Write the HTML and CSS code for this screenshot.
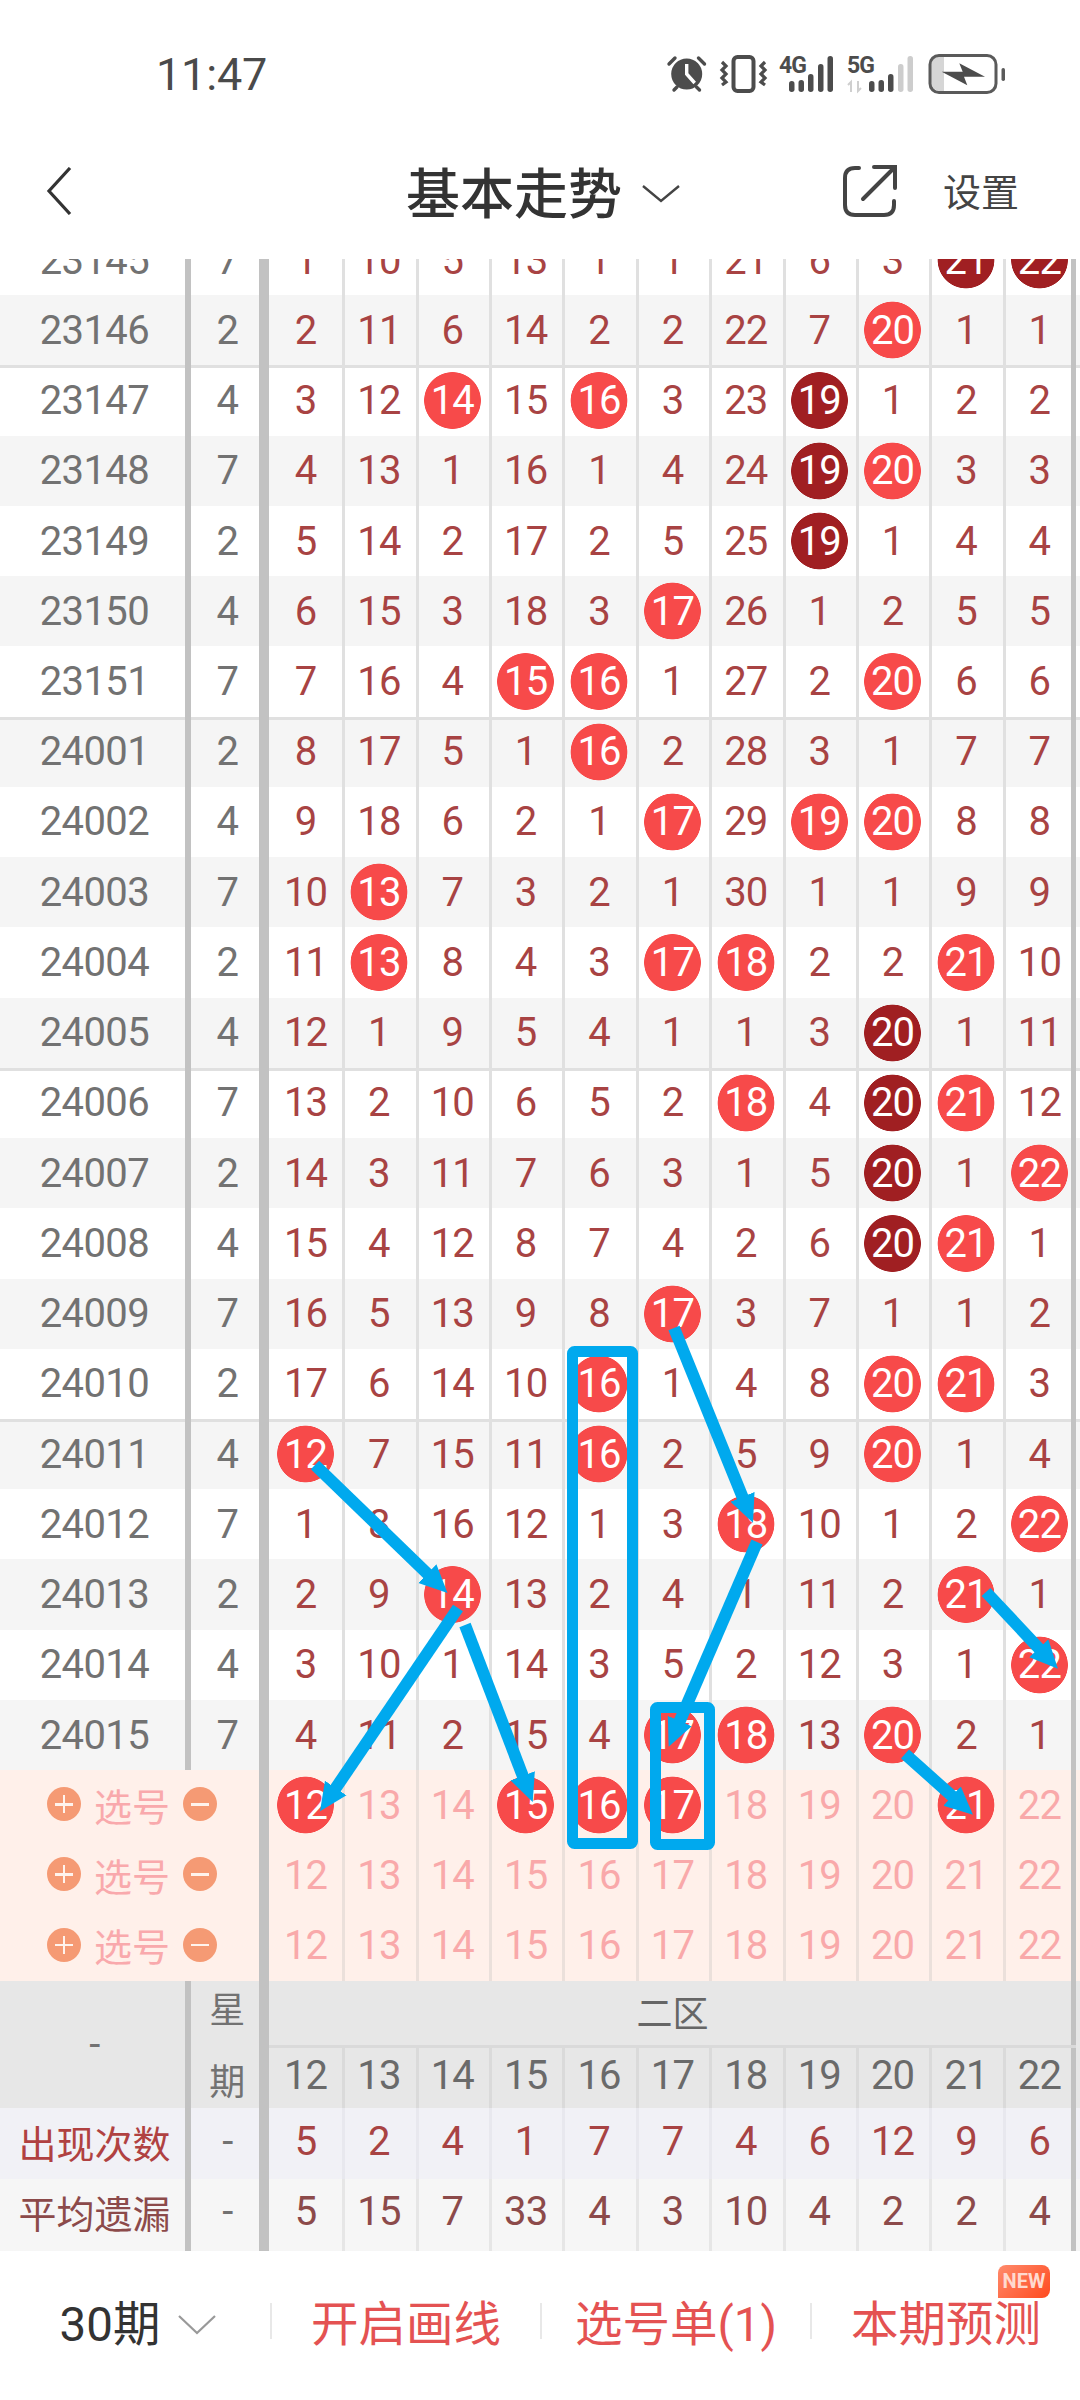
FILE: index.html
```html
<!DOCTYPE html>
<html lang="zh-CN">
<head>
    <meta charset="UTF-8">
    <meta name="viewport" content="width=device-width, initial-scale=1.0">
    <title>基本走势</title>
    <link rel="stylesheet" href="styles.css">
</head>
<body>
<div class="page">
    <!-- 状态栏 -->
    <div class="status">
        <span class="time">11:47</span>
        <svg class="status-icons" width="340" height="44" viewBox="0 0 340 44">
            <circle cx="20.7" cy="23" r="15.5" fill="#4c4c4c"/>
            <path d="M20.7 13v10l8 9" fill="none" stroke="#fff" stroke-width="3.4"/>
            <path d="M3 13l6-6M38.5 13l-6-6M8 39l3-3M33.5 39l-3-3" fill="none" stroke="#4c4c4c" stroke-width="3.4" stroke-linecap="round"/>
            <rect x="67.5" y="6" width="20" height="34" rx="4" fill="none" stroke="#4c4c4c" stroke-width="4"/>
            <path d="M56 11l4 4-4 4 4 4-4 4 4 4-4 3M99 11l-4 4 4 4-4 4 4 4-4 4 4 3" fill="none" stroke="#4c4c4c" stroke-width="3.2"/>
            <text x="113" y="22" class="net">4G</text>
            <g fill="#4c4c4c">
                <rect x="123" y="30" width="5.5" height="11" rx="2.7"/>
                <rect x="132.5" y="29" width="5.5" height="12" rx="2.7"/>
                <rect x="142" y="23" width="5.5" height="18" rx="2.7"/>
                <rect x="152" y="13" width="5.5" height="28" rx="2.7"/>
                <rect x="161.5" y="5" width="5.5" height="36" rx="2.7"/>
            </g>
            <text x="181" y="22" class="net">5G</text>
            <path d="M185 41V31l-3 3M192 30v10l3-3" fill="none" stroke="#cfcfcf" stroke-width="2"/>
            <rect x="203" y="30" width="5.5" height="11" rx="2.7" fill="#4c4c4c"/>
            <rect x="212.5" y="29" width="5.5" height="12" rx="2.7" fill="#4c4c4c"/>
            <rect x="222" y="23" width="5.5" height="18" rx="2.7" fill="#4c4c4c"/>
            <rect x="232" y="13" width="5.5" height="28" rx="2.7" fill="#cdcdcd"/>
            <rect x="241.5" y="5" width="5.5" height="36" rx="2.7" fill="#cdcdcd"/>
            <path d="M265 14a9 9 0 0 1 9-9h4v35h-4a9 9 0 0 1-9-9z" fill="#d6d6d6"/>
            <rect x="264" y="4.5" width="66" height="37" rx="9" fill="none" stroke="#5a5a5a" stroke-width="3"/>
            <path d="M275.7 20.7h21l-3.4-8.4L319 25.7h-21l3.3 8.6z" fill="#4c4c4c"/>
            <rect x="335.5" y="17" width="3.5" height="13" rx="1.7" fill="#5a5a5a"/>
        </svg>
    </div>

    <!-- 标题栏 -->
    <div class="nav">
        <svg class="back" width="26" height="48" viewBox="0 0 26 48">
            <path d="M24 1L3 24l21 23" fill="none" stroke="#333" stroke-width="3.2"/>
        </svg>
        <div class="nav-title">
            <span>基本走势</span>
            <svg width="38" height="18" viewBox="0 0 38 18">
                <path d="M1 1l18 15L37 1" fill="none" stroke="#444" stroke-width="2.4"/>
            </svg>
        </div>
        <div class="nav-actions">
            <svg width="54" height="52" viewBox="0 0 54 52">
                <path d="M16 3H12Q2 3 2 13V40Q2 50 12 50H41Q51 50 51 40V36" fill="none" stroke="#444" stroke-width="4" stroke-linecap="round"/>
                <path d="M20 34L50 4M31 2H52V23" fill="none" stroke="#444" stroke-width="4" stroke-linecap="round"/>
            </svg>
            <span>设置</span>
        </div>
    </div>

    <div class="board">
        <div class="scroll">
            <div class="rows">
                <div class="row"><span class="per">23145</span><span class="wk">7</span><b>1</b><b>10</b><b>5</b><b>13</b><b>1</b><b>1</b><b>21</b><b>6</b><b>3</b><b class="d">21</b><b class="d">22</b></div>
                <div class="row band"><span class="per">23146</span><span class="wk">2</span><b>2</b><b>11</b><b>6</b><b>14</b><b>2</b><b>2</b><b>22</b><b>7</b><b class="h">20</b><b>1</b><b>1</b></div>
                <div class="row line"><span class="per">23147</span><span class="wk">4</span><b>3</b><b>12</b><b class="h">14</b><b>15</b><b class="h">16</b><b>3</b><b>23</b><b class="d">19</b><b>1</b><b>2</b><b>2</b></div>
                <div class="row band"><span class="per">23148</span><span class="wk">7</span><b>4</b><b>13</b><b>1</b><b>16</b><b>1</b><b>4</b><b>24</b><b class="d">19</b><b class="h">20</b><b>3</b><b>3</b></div>
                <div class="row"><span class="per">23149</span><span class="wk">2</span><b>5</b><b>14</b><b>2</b><b>17</b><b>2</b><b>5</b><b>25</b><b class="d">19</b><b>1</b><b>4</b><b>4</b></div>
                <div class="row band"><span class="per">23150</span><span class="wk">4</span><b>6</b><b>15</b><b>3</b><b>18</b><b>3</b><b class="h">17</b><b>26</b><b>1</b><b>2</b><b>5</b><b>5</b></div>
                <div class="row"><span class="per">23151</span><span class="wk">7</span><b>7</b><b>16</b><b>4</b><b class="h">15</b><b class="h">16</b><b>1</b><b>27</b><b>2</b><b class="h">20</b><b>6</b><b>6</b></div>
                <div class="row band line"><span class="per">24001</span><span class="wk">2</span><b>8</b><b>17</b><b>5</b><b>1</b><b class="h">16</b><b>2</b><b>28</b><b>3</b><b>1</b><b>7</b><b>7</b></div>
                <div class="row"><span class="per">24002</span><span class="wk">4</span><b>9</b><b>18</b><b>6</b><b>2</b><b>1</b><b class="h">17</b><b>29</b><b class="h">19</b><b class="h">20</b><b>8</b><b>8</b></div>
                <div class="row band"><span class="per">24003</span><span class="wk">7</span><b>10</b><b class="h">13</b><b>7</b><b>3</b><b>2</b><b>1</b><b>30</b><b>1</b><b>1</b><b>9</b><b>9</b></div>
                <div class="row"><span class="per">24004</span><span class="wk">2</span><b>11</b><b class="h">13</b><b>8</b><b>4</b><b>3</b><b class="h">17</b><b class="h">18</b><b>2</b><b>2</b><b class="h">21</b><b>10</b></div>
                <div class="row band"><span class="per">24005</span><span class="wk">4</span><b>12</b><b>1</b><b>9</b><b>5</b><b>4</b><b>1</b><b>1</b><b>3</b><b class="d">20</b><b>1</b><b>11</b></div>
                <div class="row line"><span class="per">24006</span><span class="wk">7</span><b>13</b><b>2</b><b>10</b><b>6</b><b>5</b><b>2</b><b class="h">18</b><b>4</b><b class="d">20</b><b class="h">21</b><b>12</b></div>
                <div class="row band"><span class="per">24007</span><span class="wk">2</span><b>14</b><b>3</b><b>11</b><b>7</b><b>6</b><b>3</b><b>1</b><b>5</b><b class="d">20</b><b>1</b><b class="h">22</b></div>
                <div class="row"><span class="per">24008</span><span class="wk">4</span><b>15</b><b>4</b><b>12</b><b>8</b><b>7</b><b>4</b><b>2</b><b>6</b><b class="d">20</b><b class="h">21</b><b>1</b></div>
                <div class="row band"><span class="per">24009</span><span class="wk">7</span><b>16</b><b>5</b><b>13</b><b>9</b><b>8</b><b class="h">17</b><b>3</b><b>7</b><b>1</b><b>1</b><b>2</b></div>
                <div class="row"><span class="per">24010</span><span class="wk">2</span><b>17</b><b>6</b><b>14</b><b>10</b><b class="h">16</b><b>1</b><b>4</b><b>8</b><b class="h">20</b><b class="h">21</b><b>3</b></div>
                <div class="row band line"><span class="per">24011</span><span class="wk">4</span><b class="h">12</b><b>7</b><b>15</b><b>11</b><b class="h">16</b><b>2</b><b>5</b><b>9</b><b class="h">20</b><b>1</b><b>4</b></div>
                <div class="row"><span class="per">24012</span><span class="wk">7</span><b>1</b><b>8</b><b>16</b><b>12</b><b>1</b><b>3</b><b class="h">18</b><b>10</b><b>1</b><b>2</b><b class="h">22</b></div>
                <div class="row band"><span class="per">24013</span><span class="wk">2</span><b>2</b><b>9</b><b class="h">14</b><b>13</b><b>2</b><b>4</b><b>1</b><b>11</b><b>2</b><b class="h">21</b><b>1</b></div>
                <div class="row"><span class="per">24014</span><span class="wk">4</span><b>3</b><b>10</b><b>1</b><b>14</b><b>3</b><b>5</b><b>2</b><b>12</b><b>3</b><b>1</b><b class="h">22</b></div>
                <div class="row band"><span class="per">24015</span><span class="wk">7</span><b>4</b><b>11</b><b>2</b><b>15</b><b>4</b><b class="h">17</b><b class="h">18</b><b>13</b><b class="h">20</b><b>2</b><b>1</b></div>
            </div>
        </div>

        <!-- 选号 -->
        <div class="row pick-row">
            <span class="pick"><i class="plus"></i>选号<i class="minus"></i></span>
            <b class="h">12</b><b>13</b><b>14</b><b class="h">15</b><b class="h">16</b><b class="h">17</b><b>18</b><b>19</b><b>20</b><b class="h">21</b><b>22</b>
        </div>
        <div class="row pick-row">
            <span class="pick"><i class="plus"></i>选号<i class="minus"></i></span>
            <b>12</b><b>13</b><b>14</b><b>15</b><b>16</b><b>17</b><b>18</b><b>19</b><b>20</b><b>21</b><b>22</b>
        </div>
        <div class="row pick-row">
            <span class="pick"><i class="plus"></i>选号<i class="minus"></i></span>
            <b>12</b><b>13</b><b>14</b><b>15</b><b>16</b><b>17</b><b>18</b><b>19</b><b>20</b><b>21</b><b>22</b>
        </div>

        <!-- 表头 -->
        <div class="sum-head">
            <span class="per">-</span>
            <span class="wk"><em>星</em><em>期</em></span>
            <div class="zone">
                <div class="zone-name">二区</div>
                <div class="nums"><b>12</b><b>13</b><b>14</b><b>15</b><b>16</b><b>17</b><b>18</b><b>19</b><b>20</b><b>21</b><b>22</b></div>
            </div>
        </div>

        <!-- 统计 -->
        <div class="row stat count">
            <span class="per">出现次数</span><span class="wk">-</span><b>5</b><b>2</b><b>4</b><b>1</b><b>7</b><b>7</b><b>4</b><b>6</b><b>12</b><b>9</b><b>6</b>
        </div>
        <div class="row stat miss">
            <span class="per">平均遗漏</span><span class="wk">-</span><b>5</b><b>15</b><b>7</b><b>33</b><b>4</b><b>3</b><b>10</b><b>4</b><b>2</b><b>2</b><b>4</b>
        </div>
    </div>

    <!-- 底部 -->
    <div class="foot">
        <div class="tab period">30期
            <svg width="38" height="20" viewBox="0 0 38 20">
                <path d="M1 1l18 17L37 1" fill="none" stroke="#999" stroke-width="2.2"/>
            </svg>
        </div>
        <div class="tab">开启画线</div>
        <div class="tab">选号单(1)</div>
        <div class="tab">本期预测<span class="new">NEW</span></div>
    </div>

    <!-- 手绘标注 -->
    <svg class="marks" width="1080" height="2400" viewBox="0 0 1080 2400">
        <defs>
            <marker id="head" markerUnits="userSpaceOnUse" markerWidth="28" markerHeight="28" refX="12" refY="14" orient="auto">
                <path d="M0 1L28 14L0 27z" fill="#00a9ee"/>
            </marker>
        </defs>
        <rect x="572.5" y="1351.5" width="60" height="492" rx="2"/>
        <rect x="655.5" y="1707.5" width="54" height="137" rx="2"/>
        <line x1="315" y1="1465" x2="436" y2="1582" marker-end="url(#head)"/>
        <line x1="458" y1="1608" x2="329" y2="1798" marker-end="url(#head)"/>
        <line x1="465" y1="1625" x2="527" y2="1787" marker-end="url(#head)"/>
        <line x1="674" y1="1328" x2="747" y2="1508" marker-end="url(#head)"/>
        <line x1="757" y1="1542" x2="675" y2="1732" marker-end="url(#head)"/>
        <line x1="986" y1="1592" x2="1047" y2="1657" marker-end="url(#head)"/>
        <line x1="905" y1="1754" x2="961" y2="1804" marker-end="url(#head)"/>
    </svg>
</div>
</body>
</html>
```

FILE: styles.css
```css
body {
    margin: 0;
    background-color: #fff;
    font-family: Roboto, "Noto Sans CJK SC", sans-serif;
}

.page {
    position: relative;
    width: 1080px;
    height: 2400px;
    overflow: hidden;
}

/* status bar */
.status {
    height: 146px;
    display: flex;
    align-items: center;
    justify-content: space-between;
    padding: 0 74px 0 156px;
}

.time {
    margin-top: 2px;
    font-size: 45px;
    letter-spacing: -0.2px;
    color: #4a4a4a;
}

.net {
    font-size: 23px;
    font-weight: 700;
    letter-spacing: -1px;
    fill: #4c4c4c;
}

/* nav */
.nav {
    height: 89px;
    padding-bottom: 24px;
    display: grid;
    grid-template-columns: 406px auto 1fr;
    align-items: center;
}

.back {
    margin-left: 46px;
}

.nav-title {
    display: flex;
    align-items: center;
    gap: 20px;
    font-size: 54px;
    font-weight: 500;
    color: #333;
}

.nav-title svg {
    margin-top: 6px;
}

.nav-actions {
    display: flex;
    align-items: center;
    justify-content: flex-end;
    gap: 46px;
    padding-right: 61px;
    font-size: 38px;
    color: #444;
}

.nav-actions span {
    margin-bottom: 2px;
}

/* board */
.board {
    height: 1992px;
    overflow: hidden;
}

.scroll {
    height: 1511px;
    overflow: hidden;
}

.rows {
    margin-top: -34px;
}

.row {
    --line: #e0e0e0;
    display: grid;
    grid-template-columns: 190.8px 78px repeat(11, 73.4px);
    height: 70.24px;
    font-size: 40px;
    letter-spacing: -0.9px;
}

.band {
    background-color: #f5f5f5;
}

.line {
    background-image: linear-gradient(#e0e0e0 3px, transparent 3px);
}

.per,
.wk {
    display: flex;
    align-items: center;
    justify-content: center;
    box-sizing: border-box;
    color: #727272;
}

.per {
    padding-left: 4px;
    border-right: 6px solid #c2c2c2;
    letter-spacing: -0.6px;
}

.wk {
    padding-left: 5px;
    border-right: 10px solid #c2c2c2;
}

b {
    display: flex;
    align-items: center;
    justify-content: center;
    font-weight: 400;
    color: #a84343;
    box-shadow: inset 3px 0 var(--line);
}

b:first-of-type {
    box-shadow: none;
}

b:last-of-type {
    box-shadow: inset 3px 0 var(--line), inset -5px 0 #c2c2c2;
}

b.h,
b.d {
    color: #fff;
}

b.h {
    background-image: radial-gradient(circle 29px, #f74a4a 28px, transparent 28.7px);
}

b.d {
    background-image: radial-gradient(circle 29px, #a01f22 28px, transparent 28.7px);
}

/* pick rows */
.pick-row {
    --line: #ebe0db;
    background-color: #fff0ea;
}

.pick-row b:not(.h) {
    color: #f9a9aa;
}

.pick {
    grid-column: span 2;
    display: flex;
    align-items: center;
    justify-content: center;
    gap: 13px;
    box-sizing: border-box;
    padding: 0 0 2px 5px;
    border-right: 10px solid #c2c2c2;
    font-size: 38px;
    letter-spacing: 0;
    color: #f9a9ac;
}

.plus,
.minus {
    position: relative;
    width: 34px;
    height: 34px;
    border-radius: 50%;
    background-color: #f59a74;
}

.plus::before,
.plus::after,
.minus::before {
    content: "";
    position: absolute;
    left: 8px;
    top: 16px;
    width: 18px;
    height: 2.5px;
    background-color: #fff3ed;
}

.plus::after {
    left: 16px;
    top: 8px;
    width: 2.5px;
    height: 18px;
}

/* summary */
.sum-head {
    --line: #dadada;
    display: grid;
    grid-template-columns: 190.8px 78px 1fr;
    height: 127px;
    background-color: #e7e7e7;
    font-size: 40px;
    letter-spacing: -0.9px;
}

.sum-head .wk {
    flex-direction: column;
    gap: 20px;
    padding-bottom: 3px;
    font-size: 36px;
    letter-spacing: 0;
}

.sum-head em {
    font-style: normal;
}

.sum-head b {
    padding-bottom: 4px;
    color: #6a6a6a;
}

.zone {
    display: flex;
    flex-direction: column;
}

.zone-name {
    width: 807.4px;
    height: 67px;
    box-sizing: border-box;
    padding-bottom: 4px;
    display: flex;
    align-items: center;
    justify-content: center;
    font-size: 36px;
    letter-spacing: 0;
    color: #666;
    border-bottom: 3px solid #dadada;
    box-shadow: inset -5px 0 #c2c2c2;
}

.nums {
    flex: 1;
    display: grid;
    grid-template-columns: repeat(11, 73.4px);
}

.stat {
    height: 71.5px;
}

.stat .per {
    padding-left: 4px;
    font-size: 38px;
    letter-spacing: 0;
}

.stat b,
.stat .per,
.stat .wk {
    padding-bottom: 4px;
}

.count {
    --line: #e8e8ee;
    background-color: #f1f1f6;
}

.count .per {
    color: #b04141;
}

.miss {
    --line: #e6e6e6;
    background-color: #f6f6f6;
}

.miss b,
.miss .per,
.miss .wk {
    padding-bottom: 7px;
}

.miss .per,
.miss b {
    color: #8c4a4a;
}

/* footer */
.foot {
    display: grid;
    grid-template-columns: repeat(4, 270px);
    align-items: center;
    height: 149px;
    padding-bottom: 10px;
    box-sizing: border-box;
}

.tab {
    position: relative;
    height: 36px;
    display: flex;
    align-items: center;
    justify-content: center;
    font-size: 47.5px;
    color: #e45252;
    border-left: 2px solid #e8e8e8;
}

.period {
    gap: 18px;
    color: #333;
    border-left: none;
    padding-left: 6px;
}

.period svg {
    margin-top: 8px;
}

.new {
    position: absolute;
    right: 30px;
    top: -38px;
    width: 52px;
    height: 33px;
    border-radius: 8px 8px 8px 0;
    background-image: linear-gradient(135deg, #ff8b6c, #ff4a1f);
    font-size: 20px;
    font-weight: 700;
    line-height: 33px;
    text-align: center;
    color: #ffd9cf;
}

/* overlay */
.marks {
    position: absolute;
    left: 0;
    top: 0;
    pointer-events: none;
}

.marks rect,
.marks line {
    fill: none;
    stroke: #00a9ee;
    stroke-width: 11;
}

.marks line {
    stroke-width: 12;
}
```
